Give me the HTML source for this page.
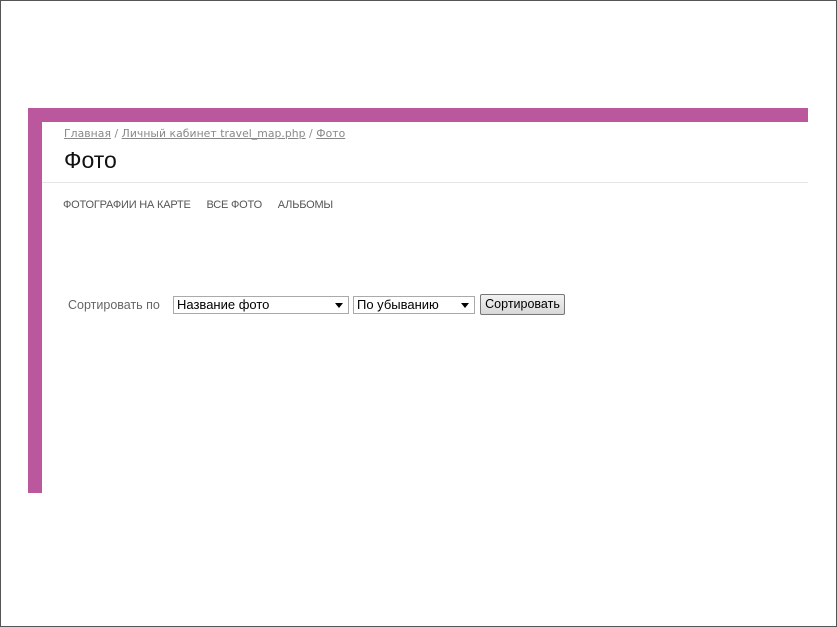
<!DOCTYPE html>
<html><head><meta charset="utf-8"><style>
body{margin:0;width:837px;height:627px;position:relative;background:#fff;font-family:"Liberation Sans",sans-serif;overflow:hidden}
.frame{position:absolute;left:0;top:0;width:835px;height:625px;border:1px solid #555}
.pink{position:absolute;left:28px;top:108px;width:780px;height:385px;background:#bb579c}
.inner{position:absolute;left:42px;top:122px;width:766px;height:371px;background:#fff}
.bc{position:absolute;left:64px;top:127px;font-family:"DejaVu Sans",sans-serif;font-size:10.8px;color:#888;letter-spacing:0.05px}
.bc a{color:#888;text-decoration:underline}
h1{position:absolute;left:64px;top:147px;margin:0;font-weight:normal;font-size:23px;color:#111;font-family:"Liberation Sans",sans-serif}
.hr{position:absolute;left:42px;top:182px;width:766px;height:1px;background:#e6e6e6}
.nav{position:absolute;left:63px;top:199px;font-size:11px;color:#555;letter-spacing:-0.2px}
.nav span{margin-right:13px}
.sort{position:absolute;left:68px;top:294px;font-size:12.5px;color:#666;display:flex;align-items:center}
.sel{border:1px solid #aaa;height:18px;box-sizing:border-box;font-size:13px;color:#000;padding:0 3px;line-height:16px;position:relative;background:#fff}
.sel:after{content:"";position:absolute;right:5px;top:6px;border-left:4px solid transparent;border-right:4px solid transparent;border-top:5px solid #000}
.btn{margin-left:5px;height:21px;box-sizing:border-box;border:1px solid #777;border-radius:2px;background:linear-gradient(#f2f2f2,#d8d8d8);font-size:12.5px;color:#000;padding:0;line-height:19px;width:85px;text-align:center}
</style></head><body>
<div class="frame"></div>
<div class="pink"></div><div class="inner"></div>
<div class="bc"><a>Главная</a> / <a>Личный кабинет travel_map.php</a> / <a>Фото</a></div>
<h1>Фото</h1>
<div class="hr"></div>
<div class="nav"><span>ФОТОГРАФИИ НА КАРТЕ</span> <span>ВСЕ ФОТО</span> <span>АЛЬБОМЫ</span></div>
<div class="sort"><span style="width:105px;display:inline-block">Сортировать по</span>
<div class="sel" style="width:176px">Название фото</div>
<div class="sel" style="width:122px;margin-left:4px">По убыванию</div>
<div class="btn">Сортировать</div></div>
</body></html>
